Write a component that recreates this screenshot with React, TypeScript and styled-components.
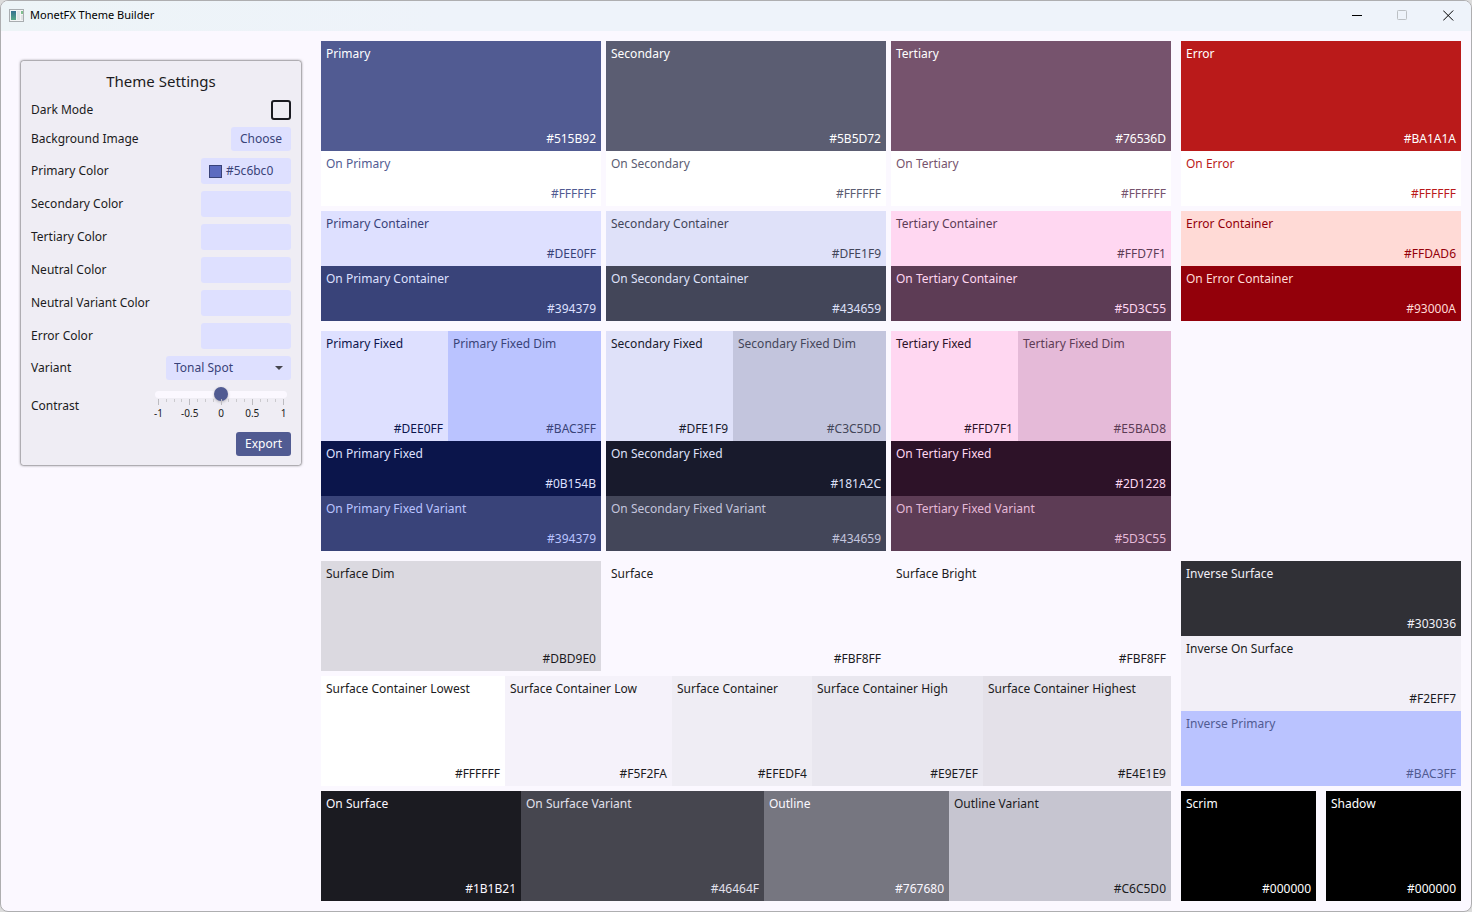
import React, { useState } from "react";
import styled, { createGlobalStyle } from "styled-components";

const GlobalStyle = createGlobalStyle`
  *, *::before, *::after { box-sizing: border-box; }
  body {
    margin: 0;
    background: #dcdcdc;
    color: #1b1b21;
    font: 12px/18px "Noto Sans", "Noto Sans CJK SC", sans-serif;
  }
  button, input, select { font: inherit; color: inherit; }
`;

const Window = styled.div`
  display: flex;
  flex-direction: column;
  min-height: 100vh;
  border: 1px solid #aeaeb0;
  border-radius: 8px;
  background: #fbf8ff;
  overflow: hidden;
`;

const TitleBar = styled.header`
  display: flex;
  align-items: center;
  gap: 6px;
  height: 30px;
  padding: 0 0 2px 8px;
  background: linear-gradient(90deg, #edf4f7 0%, #eef3fa 30%, #eef3fa 100%);
`;

const WindowTitle = styled.h1`
  flex: 1;
  margin: 0;
  color: #000;
  font-size: 11px;
  font-weight: 400;
`;

const CaptionButton = styled.button`
  display: grid;
  place-items: center;
  width: 46px;
  height: 28px;
  padding: 0;
  border: 0;
  background: none;
  color: #000;

  &:disabled { color: #bcc0c4; }
`;

const Body = styled.main`
  display: flex;
  align-items: flex-start;
  gap: 20px;
  padding: 10px 10px 10px 20px;
`;

const SettingsCard = styled.form`
  display: flex;
  flex: none;
  flex-direction: column;
  gap: 7px;
  width: 280px;
  margin-top: 20px;
  padding: 10px 10px 9px;
  border-radius: 2px;
  background: #efedf4;
  box-shadow: 0 0 1px rgba(0, 0, 0, 0.5), 0 0 3px rgba(0, 0, 0, 0.75);
`;

const CardTitle = styled.h2`
  margin: 0;
  font-size: 15px;
  font-weight: 400;
  line-height: 21px;
  text-align: center;
`;

const SettingRow = styled.div<{ $height: number }>`
  display: flex;
  align-items: center;
  justify-content: space-between;
  height: ${(p) => p.$height}px;
`;

const Checkbox = styled.input`
  appearance: none;
  width: 20px;
  height: 20px;
  margin: 0;
  border: 2px solid #1b1b21;
  border-radius: 3px;

  &:checked { background: #515b92; }
`;

const Button = styled.button<{ $filled?: boolean }>`
  height: 24px;
  padding: 0 9px;
  border: 0;
  border-radius: 3px;
  background: ${(p) => (p.$filled ? "#515b92" : "#dee0ff")};
  color: ${(p) => (p.$filled ? "#ffffff" : "#394379")};
`;

const ColorButton = styled.button`
  display: flex;
  align-items: center;
  gap: 4px;
  width: 90px;
  height: 26px;
  padding: 0 8px;
  border: 0;
  border-radius: 3px;
  background: #dee0ff;
  color: #394379;
`;

const ColorChip = styled.span`
  width: 13px;
  height: 13px;
  border: 1px solid #394379;
  background: #5c6bc0;
`;

const SelectBox = styled.div`
  position: relative;
  width: 125px;
  height: 24px;
`;

const Select = styled.select`
  appearance: none;
  width: 100%;
  height: 100%;
  padding: 0 24px 0 8px;
  border: 0;
  border-radius: 3px;
  background: #dee0ff;
  color: #394379;
`;

const SelectArrow = styled.svg`
  position: absolute;
  top: 10px;
  right: 8px;
  pointer-events: none;
`;

const ContrastControl = styled.div`
  display: flex;
  flex-direction: column;
  align-self: flex-start;
  width: 132px;
  margin-right: 4px;
`;

const Slider = styled.input`
  appearance: none;
  display: block;
  width: 100%;
  height: 14px;
  margin: 0 0 -2px;
  background: none;

  &::-webkit-slider-runnable-track {
    height: 7px;
    border-radius: 4px;
    background: #fbf8ff;
  }

  &::-webkit-slider-thumb {
    appearance: none;
    width: 14px;
    height: 14px;
    margin-top: -4px;
    border-radius: 50%;
    background: #515b92;
    box-shadow: 0 1px 3px rgba(0, 0, 0, 0.25);
  }
`;

const Ticks = styled.div`
  display: flex;
  justify-content: space-between;
  height: 7px;
  padding: 0 3px;
`;

const Tick = styled.span<{ $major: boolean }>`
  width: 1px;
  height: ${(p) => (p.$major ? 6 : 3)}px;
  background: ${(p) => (p.$major ? "#bcbbc0" : "#cbcace")};
`;

const TickLabels = styled(Ticks)`
  height: 14px;
  font-size: 10px;
  line-height: 14px;
`;

const TickLabel = styled.span`
  display: flex;
  justify-content: center;
  width: 1px;
  white-space: nowrap;
`;

const Palette = styled.div`
  display: grid;
  flex: 1;
  min-width: 0;
  grid-template-columns: minmax(0, 85fr) minmax(0, 28fr);
  gap: 10px;
`;

const Stack = styled.div<{ $gap?: number }>`
  display: flex;
  flex-direction: column;
  gap: ${(p) => p.$gap ?? 0}px;
`;

const Row = styled.div<{ $gap?: number }>`
  display: flex;
  gap: ${(p) => p.$gap ?? 0}px;
`;

const Column = styled(Stack)`
  flex: 1 1 0;
  min-width: 0;
`;

const SwatchBox = styled.div<{ $bg: string; $fg: string; $height: number; $grow?: number }>`
  display: flex;
  flex-direction: column;
  justify-content: space-between;
  height: ${(p) => p.$height}px;
  padding: 4px 5px 3px;
  background: ${(p) => p.$bg};
  color: ${(p) => p.$fg};
  ${(p) => (p.$grow ? `flex: ${p.$grow} 1 0; min-width: 0;` : "")}
`;

const Hex = styled.span`
  text-align: right;
`;

interface SwatchProps {
  name: string;
  bg: string;
  fg: string;
  height?: number;
  grow?: number;
}

function Swatch({ name, bg, fg, height = 110, grow }: SwatchProps) {
  return (
    <SwatchBox $bg={bg} $fg={fg} $height={height} $grow={grow}>
      <span>{name}</span>
      <Hex>{bg}</Hex>
    </SwatchBox>
  );
}

interface Tone {
  name: string;
  main: string;
  container: string;
  onContainer: string;
}

interface FixedTone {
  name: string;
  fixed: string;
  dim: string;
  onFixed: string;
  onVariant: string;
}

const tones: Tone[] = [
  { name: "Primary", main: "#515B92", container: "#DEE0FF", onContainer: "#394379" },
  { name: "Secondary", main: "#5B5D72", container: "#DFE1F9", onContainer: "#434659" },
  { name: "Tertiary", main: "#76536D", container: "#FFD7F1", onContainer: "#5D3C55" },
];

const errorTone: Tone = { name: "Error", main: "#BA1A1A", container: "#FFDAD6", onContainer: "#93000A" };

const fixedTones: FixedTone[] = [
  { name: "Primary", fixed: "#DEE0FF", dim: "#BAC3FF", onFixed: "#0B154B", onVariant: "#394379" },
  { name: "Secondary", fixed: "#DFE1F9", dim: "#C3C5DD", onFixed: "#181A2C", onVariant: "#434659" },
  { name: "Tertiary", fixed: "#FFD7F1", dim: "#E5BAD8", onFixed: "#2D1228", onVariant: "#5D3C55" },
];

const INK = "#1B1B21";
const PAPER = "#FBF8FF";

const surfaces: SwatchProps[] = [
  { name: "Surface Dim", bg: "#DBD9E0", fg: INK },
  { name: "Surface", bg: PAPER, fg: INK },
  { name: "Surface Bright", bg: PAPER, fg: INK },
];

// Grow weights share out the row width left after each swatch's padding.
const containers: SwatchProps[] = [
  { name: "Surface Container Lowest", bg: "#FFFFFF", fg: INK, grow: 174 },
  { name: "Surface Container Low", bg: "#F5F2FA", fg: INK, grow: 157 },
  { name: "Surface Container", bg: "#EFEDF4", fg: INK, grow: 130 },
  { name: "Surface Container High", bg: "#E9E7EF", fg: INK, grow: 161 },
  { name: "Surface Container Highest", bg: "#E4E1E9", fg: INK, grow: 178 },
];

const outlines: SwatchProps[] = [
  { name: "On Surface", bg: INK, fg: PAPER, grow: 190 },
  { name: "On Surface Variant", bg: "#46464F", fg: "#E2E1EC", grow: 233 },
  { name: "Outline", bg: "#767680", fg: PAPER, grow: 175 },
  { name: "Outline Variant", bg: "#C6C5D0", fg: INK, grow: 212 },
];

function ToneColumn({ name, main, container, onContainer }: Tone) {
  return (
    <Column $gap={5}>
      <Stack>
        <Swatch name={name} bg={main} fg="#FFFFFF" />
        <Swatch name={`On ${name}`} bg="#FFFFFF" fg={main} height={55} />
      </Stack>
      <Stack>
        <Swatch name={`${name} Container`} bg={container} fg={onContainer} height={55} />
        <Swatch name={`On ${name} Container`} bg={onContainer} fg={container} height={55} />
      </Stack>
    </Column>
  );
}

function FixedColumn({ name, fixed, dim, onFixed, onVariant }: FixedTone) {
  return (
    <Column>
      <Row>
        <Swatch name={`${name} Fixed`} bg={fixed} fg={onFixed} grow={117} />
        <Swatch name={`${name} Fixed Dim`} bg={dim} fg={onVariant} grow={143} />
      </Row>
      <Swatch name={`On ${name} Fixed`} bg={onFixed} fg={fixed} height={55} />
      <Swatch name={`On ${name} Fixed Variant`} bg={onVariant} fg={dim} height={55} />
    </Column>
  );
}

const colorSettings = ["Primary", "Secondary", "Tertiary", "Neutral", "Neutral Variant", "Error"];
const contrastMarks = ["-1", "-0.5", "0", "0.5", "1"];

function Settings() {
  const [dark, setDark] = useState(false);
  const [contrast, setContrast] = useState(0);

  return (
    <SettingsCard onSubmit={(e) => e.preventDefault()}>
      <CardTitle>Theme Settings</CardTitle>
      <SettingRow $height={21}>
        <label htmlFor="dark">Dark Mode</label>
        <Checkbox id="dark" type="checkbox" checked={dark} onChange={(e) => setDark(e.target.checked)} />
      </SettingRow>
      <SettingRow $height={24}>
        <label htmlFor="background">Background Image</label>
        <Button id="background" type="button">Choose</Button>
      </SettingRow>
      {colorSettings.map((name) => (
        <SettingRow key={name} $height={26}>
          <label htmlFor={name}>{name} Color</label>
          <ColorButton id={name} type="button">
            {name === "Primary" && (
              <>
                <ColorChip />
                #5c6bc0
              </>
            )}
          </ColorButton>
        </SettingRow>
      ))}
      <SettingRow $height={24}>
        <label htmlFor="variant">Variant</label>
        <SelectBox>
          <Select id="variant" defaultValue="Tonal Spot">
            <option>Tonal Spot</option>
          </Select>
          <SelectArrow width="8" height="4" viewBox="0 0 8 4" aria-hidden="true">
            <path d="M0 0h8L4 4z" fill="#46464f" />
          </SelectArrow>
        </SelectBox>
      </SettingRow>
      <SettingRow $height={38}>
        <label htmlFor="contrast">Contrast</label>
        <ContrastControl>
          <Slider
            id="contrast"
            type="range"
            min={-1}
            max={1}
            step={0.125}
            value={contrast}
            onChange={(e) => setContrast(Number(e.target.value))}
          />
          <Ticks aria-hidden="true">
            {Array.from({ length: 17 }, (_, i) => (
              <Tick key={i} $major={i % 4 === 0} />
            ))}
          </Ticks>
          <TickLabels>
            {contrastMarks.map((mark) => (
              <TickLabel key={mark}>{mark}</TickLabel>
            ))}
          </TickLabels>
        </ContrastControl>
      </SettingRow>
      <SettingRow $height={24}>
        <span />
        <Button type="submit" $filled>Export</Button>
      </SettingRow>
    </SettingsCard>
  );
}

function AppIcon() {
  return (
    <svg width="15" height="13" viewBox="0 0 15 13" aria-hidden="true">
      <defs>
        <linearGradient id="pane" x1="0" y1="0" x2="0" y2="1">
          <stop offset="0" stopColor="#35708f" />
          <stop offset="1" stopColor="#5aa886" />
        </linearGradient>
      </defs>
      <rect x="0.5" y="0.5" width="14" height="12" fill="#f4f5f6" stroke="#a9adb0" />
      <rect x="2" y="2" width="5" height="9" fill="url(#pane)" />
      <rect x="8" y="2" width="3" height="9" fill="#e2e5e6" />
      <rect x="12" y="2" width="2" height="3" fill="#7fbf8f" />
      <rect x="12" y="6" width="2" height="5" fill="#dfe3e4" />
    </svg>
  );
}

export default function App() {
  return (
    <>
      <GlobalStyle />
      <Window>
        <TitleBar>
          <AppIcon />
          <WindowTitle>MonetFX Theme Builder</WindowTitle>
          <Row>
            <CaptionButton aria-label="Minimize">
              <svg width="11" height="11" viewBox="0 0 11 11">
                <path d="M1 5.5h10" stroke="currentColor" />
              </svg>
            </CaptionButton>
            <CaptionButton aria-label="Maximize" disabled>
              <svg width="11" height="11" viewBox="0 0 11 11" fill="none">
                <rect x="0.5" y="0.5" width="9" height="9" rx="0.8" stroke="currentColor" />
              </svg>
            </CaptionButton>
            <CaptionButton aria-label="Close">
              <svg width="11" height="11" viewBox="0 0 11 11">
                <path d="M0.2 0.5l10 10M10.2 0.5l-10 10" stroke="currentColor" />
              </svg>
            </CaptionButton>
          </Row>
        </TitleBar>
        <Body>
          <Settings />
          <Palette>
            <Row $gap={5}>
              {tones.map((tone) => <ToneColumn key={tone.name} {...tone} />)}
            </Row>
            <Row>
              <ToneColumn {...errorTone} />
            </Row>
            <Row $gap={5}>
              {fixedTones.map((tone) => <FixedColumn key={tone.name} {...tone} />)}
            </Row>
            <span />
            <Stack $gap={5}>
              <Row $gap={5}>
                {surfaces.map((s) => <Swatch key={s.name} {...s} grow={1} />)}
              </Row>
              <Row>
                {containers.map((s) => <Swatch key={s.name} {...s} />)}
              </Row>
              <Row>
                {outlines.map((s) => <Swatch key={s.name} {...s} />)}
              </Row>
            </Stack>
            <Stack $gap={5}>
              <Stack>
                <Swatch name="Inverse Surface" bg="#303036" fg="#F2EFF7" height={75} />
                <Swatch name="Inverse On Surface" bg="#F2EFF7" fg={INK} height={75} />
                <Swatch name="Inverse Primary" bg="#BAC3FF" fg="#515B92" height={75} />
              </Stack>
              <Row $gap={10}>
                <Swatch name="Scrim" bg="#000000" fg="#FFFFFF" grow={1} />
                <Swatch name="Shadow" bg="#000000" fg="#FFFFFF" grow={1} />
              </Row>
            </Stack>
          </Palette>
        </Body>
      </Window>
    </>
  );
}
